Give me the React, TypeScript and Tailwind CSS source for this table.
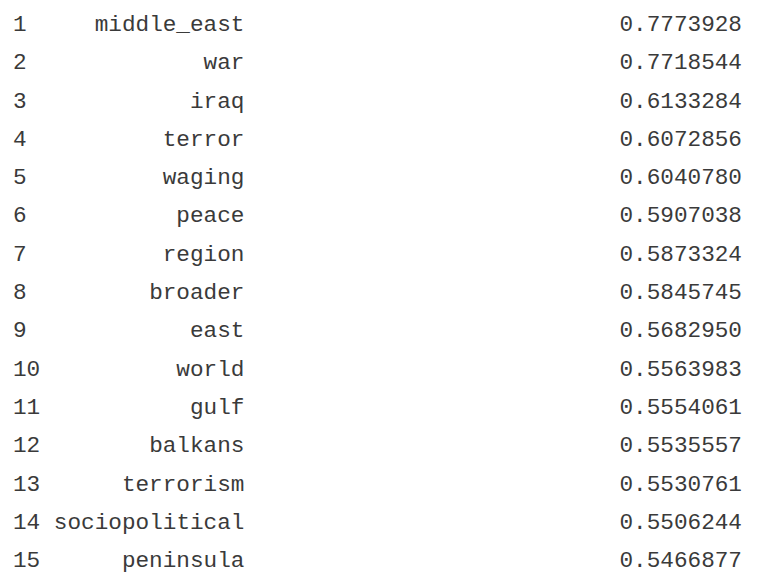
const ROWS: [string, string][] = [
  ['middle_east', '0.7773928'],
  ['war', '0.7718544'],
  ['iraq', '0.6133284'],
  ['terror', '0.6072856'],
  ['waging', '0.6040780'],
  ['peace', '0.5907038'],
  ['region', '0.5873324'],
  ['broader', '0.5845745'],
  ['east', '0.5682950'],
  ['world', '0.5563983'],
  ['gulf', '0.5554061'],
  ['balkans', '0.5535557'],
  ['terrorism', '0.5530761'],
  ['sociopolitical', '0.5506244'],
  ['peninsula', '0.5466877'],
];

export default function App() {
  return (
    <div className="w-[768px] h-[580px] bg-white overflow-hidden pt-[6px]">
      <div
        className="w-[742px] pl-[13px] text-[22.7px] leading-[38.3px] text-[#3a3a3a]"
        style={{ fontFamily: '"Liberation Mono", "Courier New", monospace' }}
      >
        {ROWS.map(([word, value], i) => (
          <div key={i} className="grid grid-cols-[3ch_14ch_1fr] whitespace-pre">
            <span>{i + 1}</span>
            <span className="text-right">{word}</span>
            <span className="text-right">{value}</span>
          </div>
        ))}
      </div>
    </div>
  );
}
